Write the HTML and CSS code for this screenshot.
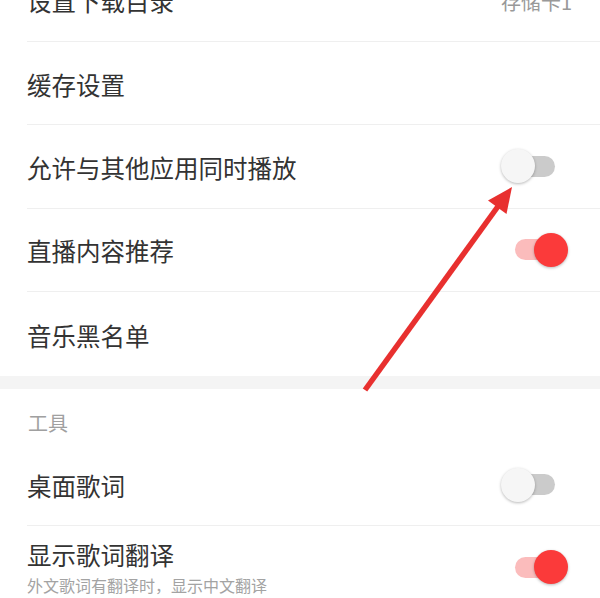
FILE: index.html
```html
<!DOCTYPE html>
<html lang="zh-CN">
<head>
<meta charset="utf-8">
<link rel="stylesheet" href="styles.css">
</head>
<body>
<div class="page">
  <div class="group group-top">
    <div class="row"><span class="title">设置下载目录</span><span class="value">存储卡1</span></div>
    <div class="row"><span class="title">缓存设置</span></div>
    <div class="row"><span class="title">允许与其他应用同时播放</span><span class="switch"><span class="track"></span><span class="thumb"></span></span></div>
    <div class="row"><span class="title">直播内容推荐</span><span class="switch on"><span class="track"></span><span class="thumb"></span></span></div>
    <div class="row last"><span class="title">音乐黑名单</span></div>
  </div>
  <div class="band"></div>
  <div class="group">
    <div class="header">工具</div>
    <div class="row tight"><span class="title">桌面歌词</span><span class="switch"><span class="track"></span><span class="thumb"></span></span></div>
    <div class="row last tall">
      <div class="stack">
        <span class="title">显示歌词翻译</span>
        <span class="sub">外文歌词有翻译时，显示中文翻译</span>
      </div>
      <span class="switch on"><span class="track"></span><span class="thumb"></span></span>
    </div>
  </div>
  <svg class="arrow" width="600" height="598" viewBox="0 0 600 598">
    <line x1="365" y1="390" x2="499" y2="205" stroke="#e8302f" stroke-width="5.5" stroke-linecap="butt"/>
    <polygon points="512,187 506.5,214 488,200.5" fill="#e8302f"/>
  </svg>
</div>
</body>
</html>
```
FILE: styles.css
```css
* { box-sizing: border-box; }
html, body { margin: 0; padding: 0; background: #fff; }
body {
  font-family: "Noto Sans CJK SC", "Noto Sans", sans-serif;
  color: #333;
}
.page {
  position: relative;
  width: 600px;
  height: 598px;
  overflow: hidden;
  background: #fff;
}
.group-top { margin-top: -41.33px; }
.row {
  display: flex;
  align-items: center;
  justify-content: space-between;
  height: 83.33px;
  margin-left: 27px;
  padding-right: 32px;
  border-bottom: 1px solid #efefef;
}
.row.last { border-bottom: none; height: 84.33px; }
.row.tight { height: 82px; }
.row.tall { height: 82px; }
.title {
  font-size: 24.5px;
  line-height: 30px;
  color: #333;
  padding-top: 3px;
}
.value {
  font-size: 20px;
  color: #999;
  margin-right: -4px;
  padding-top: 4px;
}
.band {
  height: 13px;
  background: #f4f4f4;
}
.header {
  height: 55px;
  padding: 24px 0 0 28px;
  font-size: 20px;
  line-height: 20px;
  color: #a0a0a0;
}
.stack {
  display: flex;
  flex-direction: column;
}
.stack .title { padding-top: 0; line-height: 30px; }
.sub {
  font-size: 16px;
  line-height: 20px;
  margin-top: 5px;
  color: #a3a3a3;
}
.switch {
  position: relative;
  flex: none;
  width: 67px;
  height: 34px;
}
.track {
  position: absolute;
  left: 14px;
  top: 6.5px;
  width: 40px;
  height: 21px;
  border-radius: 11px;
  background: #cbcbcb;
}
.thumb {
  position: absolute;
  top: 0;
  left: 0;
  width: 34px;
  height: 34px;
  border-radius: 50%;
  background: #f6f6f6;
  box-shadow: 0 1px 3px rgba(0,0,0,0.28);
}
.switch.on .track { background: #fbbcbc; }
.switch.on .thumb {
  left: auto;
  right: 0;
  background: #fb3a3a;
}
.arrow {
  position: absolute;
  left: 0;
  top: 0;
  pointer-events: none;
}
```
